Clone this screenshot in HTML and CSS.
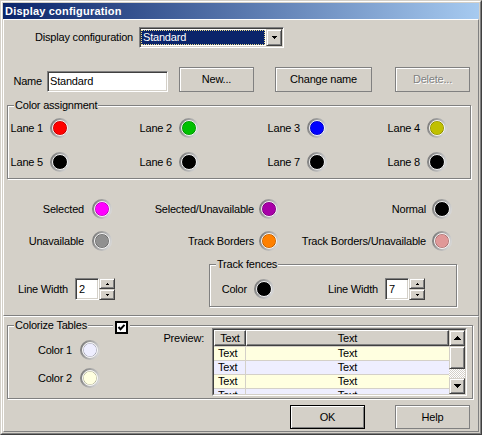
FILE: index.html
```html
<!DOCTYPE html>
<html>
<head>
<meta charset="utf-8">
<title>Display configuration</title>
<link rel="stylesheet" href="styles.css">
</head>
<body>
<div class="window">
  <div class="frame">
    <div class="titlebar">Display configuration</div>
    <div class="client">
      <div class="panel panel-top">
        <div class="row-config">
          <span class="lbl-config">Display configuration</span>
          <div class="combo sunken">
            <span class="combo-value">Standard</span>
            <span class="combo-btn raised">
              <svg width="5" height="3" viewBox="0 0 5 3" shape-rendering="crispEdges"><path d="M0 0h5v1H0zM1 1h3v1H1zM2 2h1v1H2z" fill="#000"/></svg>
            </span>
          </div>
        </div>

        <div class="row-name">
          <span class="lbl-name">Name</span>
          <div class="edit sunken">Standard</div>
          <button class="btn btn-new">New...</button>
          <button class="btn btn-change">Change name</button>
          <button class="btn btn-delete" disabled>Delete...</button>
        </div>

        <div class="group group-colors">
          <span class="group-title">Color assignment</span>
          <div class="lane-grid">
            <div class="cell"><span>Lane 1</span><span class="swatch"><span class="dot red"></span></span></div>
            <div class="cell"><span>Lane 2</span><span class="swatch"><span class="dot green"></span></span></div>
            <div class="cell"><span>Lane 3</span><span class="swatch"><span class="dot blue"></span></span></div>
            <div class="cell"><span>Lane 4</span><span class="swatch"><span class="dot olive"></span></span></div>
            <div class="cell"><span>Lane 5</span><span class="swatch"><span class="dot black"></span></span></div>
            <div class="cell"><span>Lane 6</span><span class="swatch"><span class="dot black"></span></span></div>
            <div class="cell"><span>Lane 7</span><span class="swatch"><span class="dot black"></span></span></div>
            <div class="cell"><span>Lane 8</span><span class="swatch"><span class="dot black"></span></span></div>
          </div>
        </div>

        <div class="state-grid">
          <div class="cell g8"><span>Selected</span><span class="swatch"><span class="dot magenta"></span></span></div>
          <div class="cell g5"><span>Selected/Unavailable</span><span class="swatch"><span class="dot purple"></span></span></div>
          <div class="cell g6"><span>Normal</span><span class="swatch"><span class="dot black"></span></span></div>
          <div class="cell g8"><span>Unavailable</span><span class="swatch"><span class="dot gray"></span></span></div>
          <div class="cell g5"><span>Track Borders</span><span class="swatch"><span class="dot orange"></span></span></div>
          <div class="cell g6"><span>Track Borders/Unavailable</span><span class="swatch"><span class="dot pink"></span></span></div>
        </div>

        <div class="row-width">
          <div class="cell lw-cell">
            <span>Line Width</span>
            <div class="spin">
              <div class="spin-edit sunken">2</div>
              <div class="spin-btns">
                <span class="spin-btn raised"><svg width="3" height="2" viewBox="0 0 3 2" shape-rendering="crispEdges"><path d="M1 0h1v1H1zM0 1h3v1H0z" fill="#000"/></svg></span>
                <span class="spin-btn raised"><svg width="3" height="2" viewBox="0 0 3 2" shape-rendering="crispEdges"><path d="M0 0h3v1H0zM1 1h1v1H1z" fill="#000"/></svg></span>
              </div>
            </div>
          </div>
          <div class="group group-fences">
            <span class="group-title">Track fences</span>
            <div class="fence-row">
              <div class="cell f1"><span>Color</span><span class="swatch"><span class="dot black"></span></span></div>
              <div class="cell f2">
                <span>Line Width</span>
                <div class="spin">
                  <div class="spin-edit sunken">7</div>
                  <div class="spin-btns">
                    <span class="spin-btn raised"><svg width="3" height="2" viewBox="0 0 3 2" shape-rendering="crispEdges"><path d="M1 0h1v1H1zM0 1h3v1H0z" fill="#000"/></svg></span>
                    <span class="spin-btn raised"><svg width="3" height="2" viewBox="0 0 3 2" shape-rendering="crispEdges"><path d="M0 0h3v1H0zM1 1h1v1H1z" fill="#000"/></svg></span>
                  </div>
                </div>
              </div>
            </div>
          </div>
        </div>
      </div>

      <div class="panel panel-bottom">
        <div class="group group-colorize">
          <span class="group-title">Colorize Tables</span>
          <span class="check">
            <svg width="9" height="9" viewBox="0 0 9 9"><polyline points="1.5,4 3.5,6.2 7.5,1.8" fill="none" stroke="#000" stroke-width="2"/></svg>
          </span>
          <div class="colorize-body">
            <div class="color-col">
              <div class="cell"><span>Color 1</span><span class="swatch"><span class="dot lav"></span></span></div>
              <div class="cell"><span>Color 2</span><span class="swatch"><span class="dot cream"></span></span></div>
            </div>
            <span class="preview-label">Preview:</span>
            <div class="preview">
              <div class="preview-in">
                <div class="pv-table">
                  <div class="pv-head">
                    <span class="hc hc1">Text</span>
                    <span class="hc hc2">Text</span>
                  </div>
                  <div class="pv-body">
                    <div class="pv-row cream"><span class="c1">Text</span><span class="c2">Text</span></div>
                    <div class="pv-row lav"><span class="c1">Text</span><span class="c2">Text</span></div>
                    <div class="pv-row cream"><span class="c1">Text</span><span class="c2">Text</span></div>
                    <div class="pv-row lav"><span class="c1">Text</span><span class="c2">Text</span></div>
                  </div>
                </div>
                <div class="vscroll">
                  <span class="sb-btn raised"><svg width="7" height="4" viewBox="0 0 7 4" shape-rendering="crispEdges"><path d="M3 0h1v1H3zM2 1h3v1H2zM1 2h5v1H1zM0 3h7v1H0z" fill="#000"/></svg></span>
                  <span class="sb-thumb raised"></span>
                  <span class="sb-track"></span>
                  <span class="sb-btn raised"><svg width="7" height="4" viewBox="0 0 7 4" shape-rendering="crispEdges"><path d="M0 0h7v1H0zM1 1h5v1H1zM2 2h3v1H2zM3 3h1v1H3z" fill="#000"/></svg></span>
                </div>
              </div>
            </div>
          </div>
        </div>
        <div class="dlg-buttons">
          <button class="btn btn-ok">OK</button>
          <button class="btn btn-help">Help</button>
        </div>
      </div>
    </div>
  </div>
</div>
</body>
</html>
```

FILE: styles.css
```css
* { box-sizing: border-box; }

body {
  margin: 0;
  font: 11px "Liberation Sans", Arial, sans-serif;
  line-height: 13px;
  letter-spacing: -0.2px;
  color: #000;
  background: #d4d0c8;
}

.window {
  width: 482px;
  height: 435px;
  border: 1px solid;
  border-color: #d4d0c8 #404040 #404040 #d4d0c8;
  background: #d4d0c8;
}

.frame {
  height: 100%;
  border: 1px solid;
  border-color: #fff #808080 #808080 #fff;
  padding: 1px;
  display: flex;
  flex-direction: column;
}

.titlebar {
  flex: none;
  height: 16px;
  line-height: 16px;
  padding-left: 2px;
  background: linear-gradient(to right, #0a246a, #a6caf0);
  color: #fff;
  font-weight: bold;
  letter-spacing: 0.2px;
  white-space: nowrap;
}

.client {
  flex: 1;
  display: flex;
  flex-direction: column;
}

.panel {
  border: 1px solid;
  border-color: #fff #808080 #808080 #fff;
}
.panel-top { flex: none; height: 297px; }
.panel-bottom { flex: 1; }

/* generic 3D edges */
.sunken {
  border: 1px solid;
  border-color: #808080 #fff #fff #808080;
  box-shadow: inset 1px 1px #404040, inset -1px -1px #d4d0c8;
  padding: 1px;
  background: #fff;
}
.raised {
  background: #d4d0c8;
  border: 1px solid;
  border-color: #d4d0c8 #404040 #404040 #d4d0c8;
  box-shadow: inset 1px 1px #fff, inset -1px -1px #808080;
}

.btn {
  font: inherit;
  letter-spacing: inherit;
  color: #000;
  background: #d4d0c8;
  border: 1px solid #808080;
  box-shadow: inset 1px 1px #fff;
  padding: 0;
  height: 25px;
}
.btn[disabled] {
  color: #808080;
  text-shadow: 1px 1px 0 #fff;
}

/* row 1 */
.row-config {
  display: flex;
  align-items: center;
  height: 21px;
  margin-top: 7px;
}
.lbl-config {
  width: 129px;
  text-align: right;
  margin-right: 6px;
  white-space: nowrap;
}
.combo {
  width: 145px;
  height: 21px;
  display: flex;
}
.combo-value {
  flex: 1;
  margin: 1px 1px 1px 0;
  background: #0a246a;
  color: #fff;
  border: 1px dotted #e8d98a;
  line-height: 13px;
  padding-left: 1px;
}
.combo-btn {
  width: 16px;
  display: flex;
  align-items: center;
  justify-content: center;
}

/* row 2 */
.row-name {
  display: flex;
  align-items: flex-end;
  height: 25px;
  margin-top: 19px;
}
.lbl-name {
  width: 38px;
  height: 21px;
  line-height: 21px;
  text-align: right;
}
.edit {
  margin-left: 5px;
  width: 121px;
  height: 21px;
  line-height: 17px;
  padding: 1px 1px 1px 2px;
}
.btn-new { margin-left: 11px; width: 75px; }
.btn-change { margin-left: 21px; width: 97px; }
.btn-delete { margin-left: 23px; width: 75px; }

/* group boxes */
.group {
  position: relative;
  border: 1px solid #808080;
  box-shadow: inset 1px 1px #fff, 1px 1px #fff;
}
.group-title {
  position: absolute;
  top: -7px;
  left: 6px;
  padding: 0 1px;
  line-height: 13px;
  background: #d4d0c8;
  white-space: nowrap;
}

.group-colors {
  margin: 13px 0 0 3px;
  width: 464px;
  height: 74px;
}
.lane-grid {
  display: grid;
  grid-template-columns: 62px 129px 128px 120px;
  grid-auto-rows: 20px;
  row-gap: 14px;
  padding-top: 12px;
}

.cell {
  display: flex;
  align-items: center;
  justify-content: flex-end;
  gap: 7px;
  white-space: nowrap;
}

/* colour swatch */
.swatch {
  flex: none;
  width: 20px;
  height: 20px;
  border-radius: 50%;
  padding: 2px;
  background: linear-gradient(110deg, #6e6e6e 0%, #a8a8a8 45%, #e4e4e4 100%);
}
.dot {
  display: block;
  width: 16px;
  height: 16px;
  border-radius: 50%;
  border: 1.5px solid #f6f6f6;
  box-shadow: inset 0 0 0 0.6px rgba(0, 0, 0, 0.35);
}
.red { background: #ff0000; }
.green { background: #00c000; }
.blue { background: #0000ff; }
.olive { background: #c0c000; }
.black { background: #000; }
.magenta { background: #ff00ff; }
.purple { background: #a800a8; }
.gray { background: #909090; }
.orange { background: #ff8000; }
.pink { background: #e09898; }
.lav { background: #eeeeff; }
.cream { background: #ffffe0; }

/* states */
.state-grid {
  display: grid;
  grid-template-columns: 108px 167px 173px;
  grid-auto-rows: 20px;
  row-gap: 12px;
  margin-top: 20px;
}
.g8 { gap: 8px; }
.g5 { gap: 5px; }
.g6 { gap: 6px; }

/* line width row */
.row-width {
  display: flex;
  align-items: flex-start;
  margin-top: 13px;
}
.lw-cell {
  width: 111px;
  height: 22px;
  margin-top: 14px;
}
.group-fences {
  margin-left: 94px;
  width: 248px;
  height: 43px;
}
.fence-row {
  display: flex;
  padding-top: 13px;
}
.f1 { width: 64px; height: 22px; }
.f2 { width: 151px; height: 22px; }

.spin { display: flex; }
.spin-edit {
  width: 24px;
  height: 22px;
  line-height: 18px;
  padding: 1px 1px 1px 3px;
}
.spin-btns {
  display: flex;
  flex-direction: column;
  width: 16px;
}
.spin-btn {
  height: 11px;
  display: flex;
  align-items: center;
  justify-content: center;
}

/* colorize tables */
.group-colorize {
  margin: 8px 0 0 3px;
  width: 466px;
  height: 74px;
}
.check {
  position: absolute;
  top: -5px;
  left: 107px;
  width: 13px;
  height: 13px;
  border: 2px solid #000;
  background: #fff;
  box-shadow: 0 0 0 2px #d4d0c8;
  display: flex;
  align-items: center;
  justify-content: center;
}
.colorize-body {
  display: flex;
  align-items: flex-start;
}
.color-col {
  width: 92px;
  padding-top: 14px;
  display: flex;
  flex-direction: column;
  gap: 8px;
}
.color-col .cell { height: 20px; gap: 8px; }
.preview-label {
  width: 104px;
  text-align: right;
  margin-top: 6px;
}
.preview {
  margin: 2px 0 0 8px;
  width: 255px;
  height: 68px;
  border: 1px solid;
  border-color: #808080 #fff #fff #808080;
}
.preview-in {
  height: 100%;
  border: 1px solid;
  border-color: #404040 #d4d0c8 #d4d0c8 #404040;
  display: flex;
  overflow: hidden;
  background: #fff;
}
.pv-table {
  flex: 1;
  overflow: hidden;
}
.pv-head {
  display: flex;
  height: 16px;
}
.hc {
  display: flex;
  align-items: center;
  justify-content: center;
  background: #d4d0c8;
  border: 1px solid;
  border-color: #fff #404040 #404040 #fff;
  box-shadow: inset -1px -1px #808080;
}
.hc1 { width: 32px; }
.hc2 { flex: 1; }
.pv-body { border-top: 1px solid #d4d0c8; }
.pv-row {
  display: flex;
  height: 14px;
  line-height: 13px;
  border-bottom: 1px solid #d4d0c8;
}
.pv-row.cream { background: #ffffe0; }
.pv-row.lav { background: #eeeeff; }
.pv-row .c1 {
  width: 32px;
  padding-left: 4px;
  border-right: 1px solid #d4d0c8;
}
.pv-row .c2 {
  flex: 1;
  text-align: center;
}

.vscroll {
  width: 16px;
  flex: none;
  display: flex;
  flex-direction: column;
}
.sb-btn {
  height: 16px;
  display: flex;
  align-items: center;
  justify-content: center;
}
.sb-thumb { height: 23px; }
.sb-track {
  flex: 1;
  background: repeating-conic-gradient(#fff 0 25%, #d4d0c8 0 50%) 0 0 / 2px 2px;
}

/* dialog buttons */
.dlg-buttons {
  display: flex;
  justify-content: flex-end;
  gap: 30px;
  margin-top: 6px;
  padding-right: 8px;
}
.btn-ok, .btn-help {
  width: 75px;
  height: 24px;
}
.btn-ok {
  border-color: #000;
  box-shadow: inset 1px 1px #fff, inset -1px -1px #808080;
}
```
